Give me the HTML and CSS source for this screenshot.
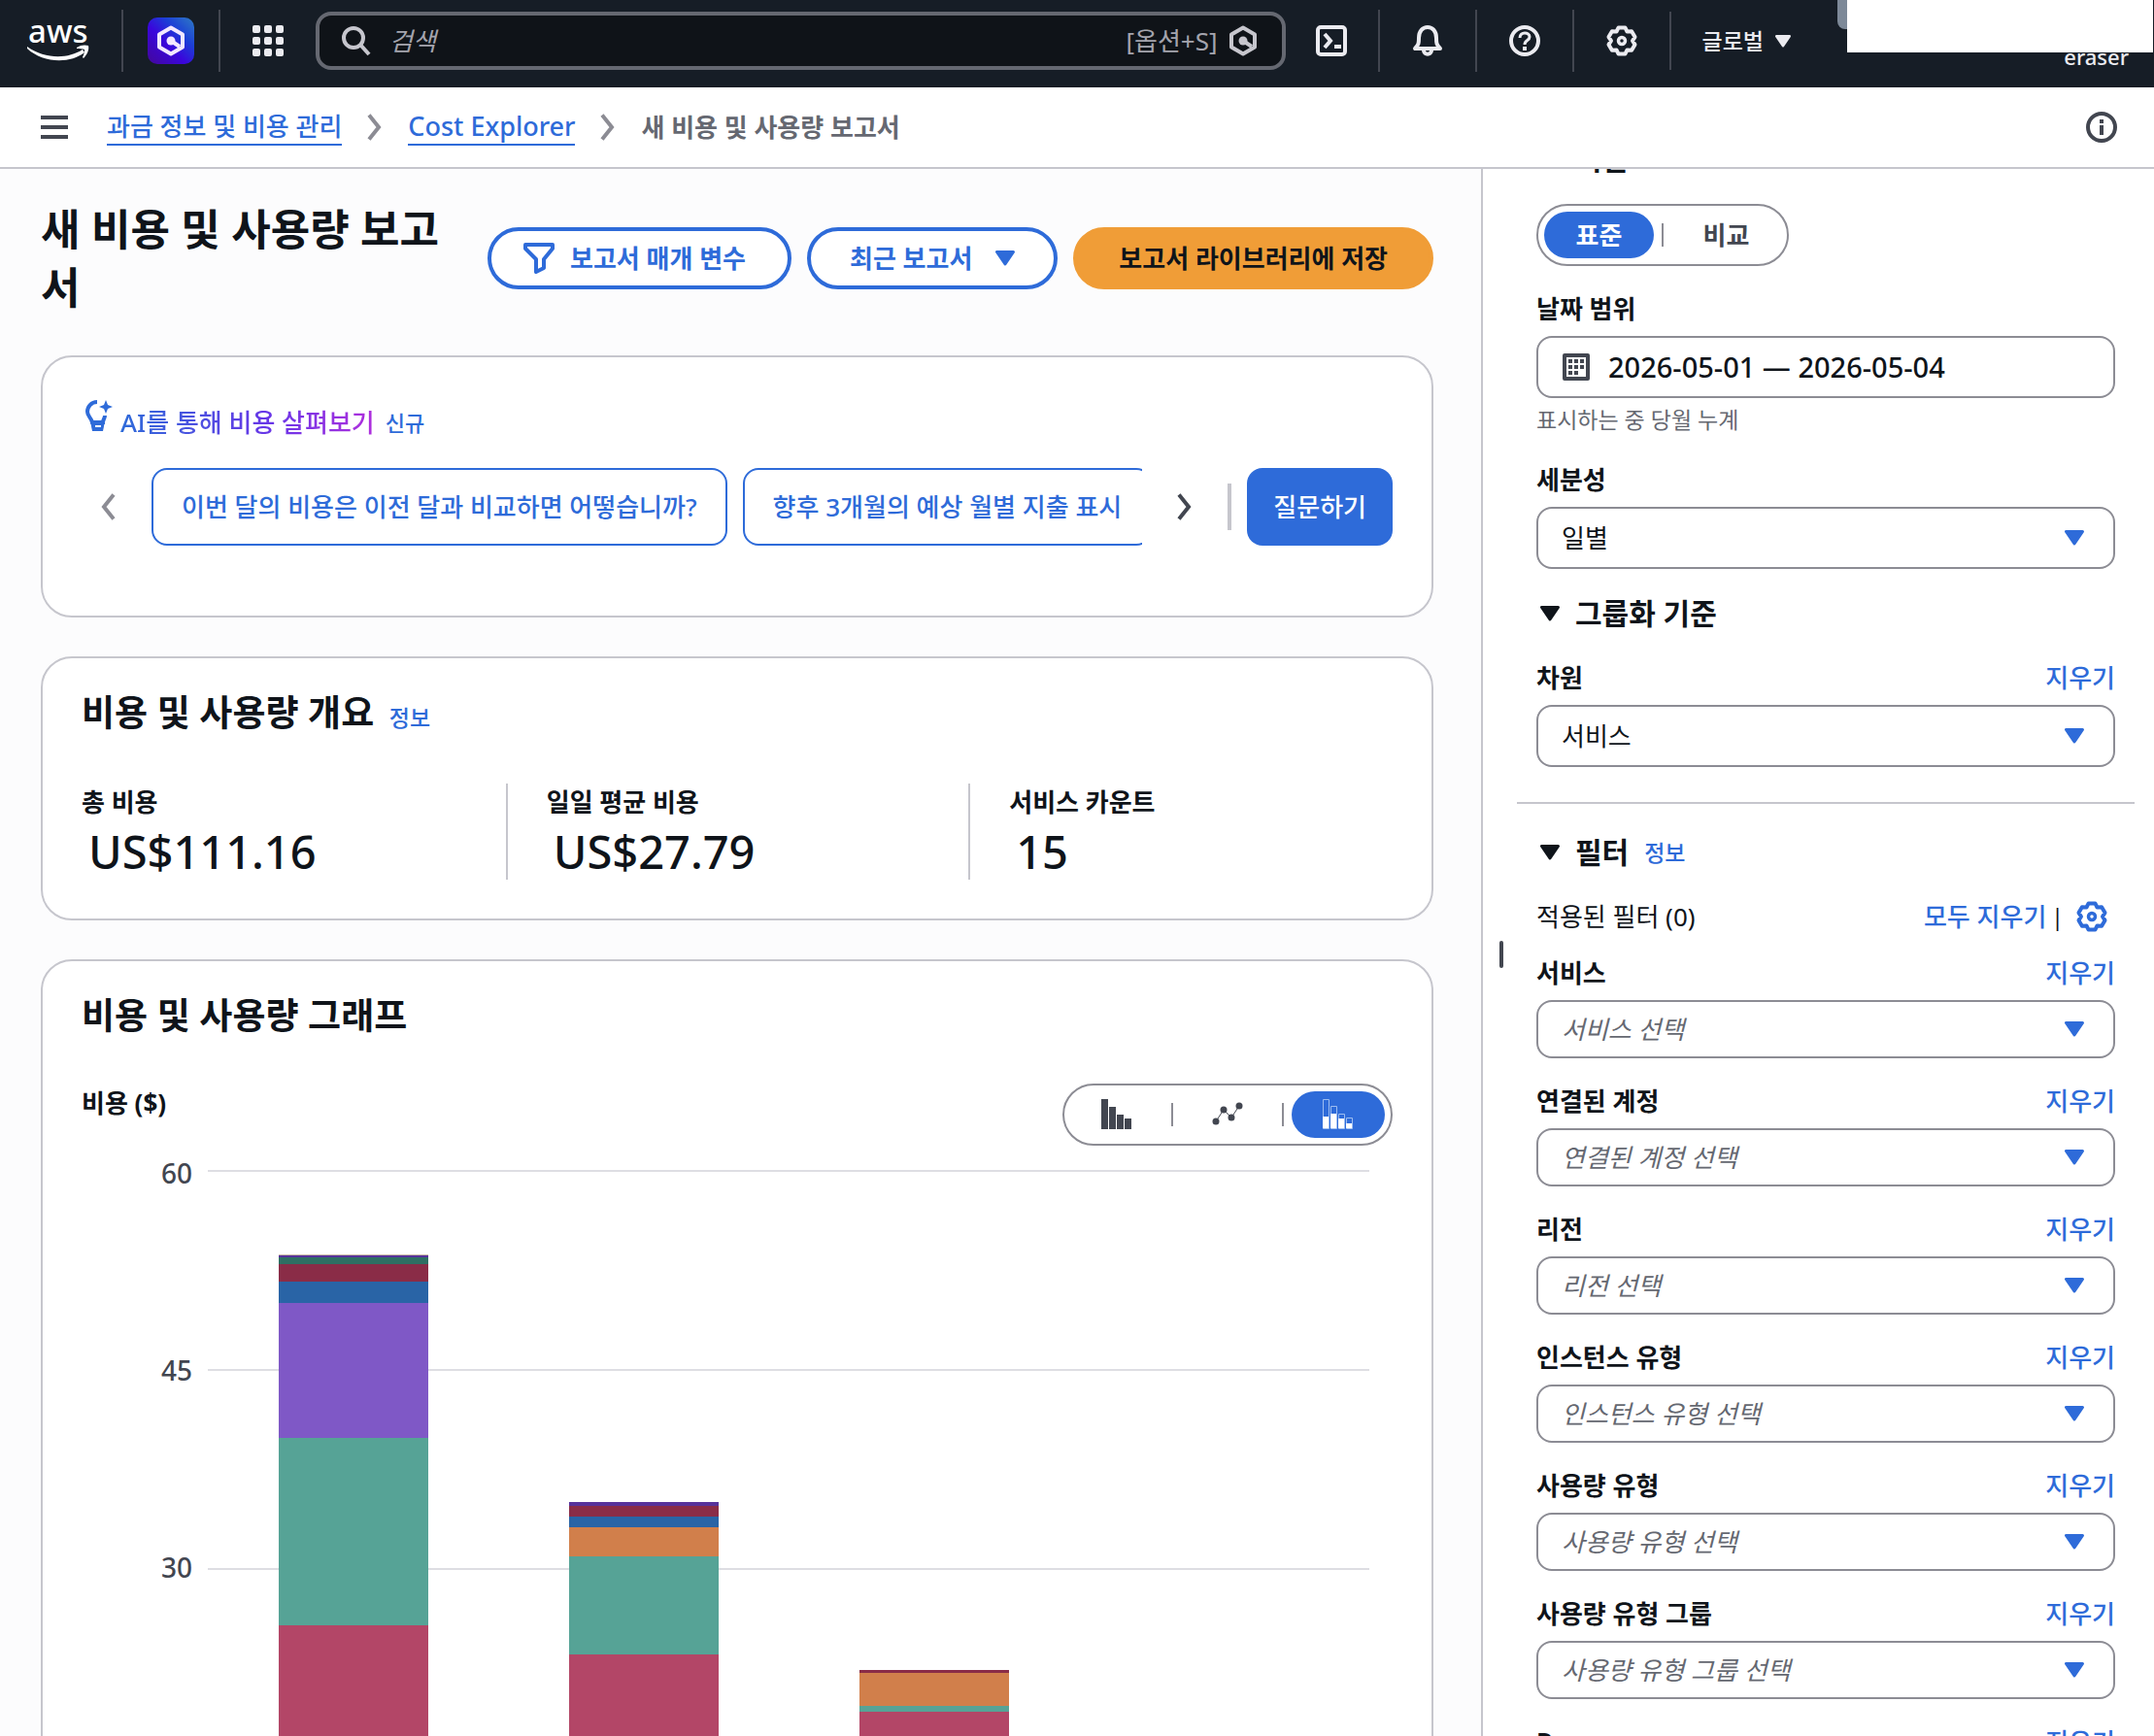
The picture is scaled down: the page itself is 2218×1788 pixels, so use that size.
FILE: index.html
```html
<!DOCTYPE html>
<html lang="ko">
<head>
<meta charset="utf-8">
<meta name="viewport" content="width=device-width, initial-scale=1">
<title>새 비용 및 사용량 보고서</title>
<link rel="stylesheet" href="styles.css">
</head>
<body>
<svg class="defs" aria-hidden="true">
  <symbol id="gear" viewBox="0 0 32 32"><path d="M12.6 2.4h6.8l2.1 4.1 4.6-.2 3.4 5.8L27 16l2.5 3.9-3.4 5.8-4.6-.2-2.1 4.1h-6.8l-2.1-4.1-4.6.2-3.4-5.8L5 16l-2.5-3.9 3.4-5.8 4.6.2z" fill="none" stroke="currentColor" stroke-width="4" stroke-linejoin="round"/><circle cx="16" cy="16" r="3.5" fill="none" stroke="currentColor" stroke-width="3.500"/></symbol>
  <symbol id="assistant" viewBox="0 0 32 32"><path d="M16 2.5 28 9.5v13l-12 7-12-7v-13z" fill="none" stroke="currentColor" stroke-width="4" stroke-linejoin="round"/><path d="M16 16l9 6" stroke="currentColor" stroke-width="4"/><circle cx="16" cy="16" r="4.5" fill="currentColor"/></symbol>
  <symbol id="caret" viewBox="0 0 20 16"><path d="M1.500 1.500h17l-8.500 12.500z" fill="currentColor" stroke="currentColor" stroke-width="3" stroke-linejoin="round"/></symbol>
  <symbol id="chevron" viewBox="0 0 16 28"><path d="M2 1.500l10 12.500-10 12.500" fill="none" stroke="currentColor" stroke-width="4"/></symbol>
</svg>

<header class="topnav">
  <a class="logo" href="#" aria-label="AWS">
    <svg width="66" height="42" viewBox="0 0 66 42"><text x="2" y="23" class="logo-text">aws</text><path d="M1 27c18 13 42 13 57 3l2 3C45 45 17 44 1 29z" fill="#fff"/><path d="M52 28c4-3 9-3 12-2 1 4-1 9-5 13l-1-1c2-4 2-6 2-8-2-1-5-1-8-1z" fill="#fff"/></svg>
  </a>
  <div class="nav-cell"><button class="q-tile" aria-label="Amazon Q"><svg width="32" height="32"><use href="#assistant"/></svg></button></div>
  <div class="nav-cell"><button class="icon-btn" aria-label="서비스"><svg width="32" height="32" viewBox="0 0 32 32" fill="currentColor"><rect width="8" height="8" rx="2"/><rect x="12" width="8" height="8" rx="2"/><rect x="24" width="8" height="8" rx="2"/><rect y="12" width="8" height="8" rx="2"/><rect x="12" y="12" width="8" height="8" rx="2"/><rect x="24" y="12" width="8" height="8" rx="2"/><rect y="24" width="8" height="8" rx="2"/><rect x="12" y="24" width="8" height="8" rx="2"/><rect x="24" y="24" width="8" height="8" rx="2"/></svg></button></div>
  <div class="search">
    <svg width="32" height="32" viewBox="0 0 32 32" fill="none" stroke="currentColor" stroke-width="4"><circle cx="13" cy="13" r="10"/><path d="M20 20l9 10"/></svg>
    <input type="search" placeholder="검색" aria-label="검색">
    <span class="shortcut">[옵션+S]</span>
    <svg width="32" height="32"><use href="#assistant"/></svg>
  </div>
  <div class="nav-cell plain"><button class="icon-btn" aria-label="CloudShell"><svg width="32" height="32" viewBox="0 0 32 32" fill="none" stroke="currentColor" stroke-width="4"><rect x="2" y="2" width="28" height="28" rx="3"/><path d="M9 9l6 7-6 7M19 22h7"/></svg></button></div>
  <div class="nav-cell"><button class="icon-btn" aria-label="알림"><svg width="32" height="32" viewBox="0 0 32 32" fill="none" stroke="currentColor" stroke-width="4" stroke-linejoin="round"><path d="M3 24h26c-4-4-4-6-4-11 0-7-4-11-9-11s-9 4-9 11c0 5 0 7-4 11z"/><path d="M12 26c0 5 8 5 8 0"/></svg></button></div>
  <div class="nav-cell"><button class="icon-btn" aria-label="도움말"><svg width="32" height="32" viewBox="0 0 32 32" fill="none" stroke="currentColor" stroke-width="4"><circle cx="16" cy="16" r="14"/><path d="M11 13c0-7 10-6 10-1 0 4-5 3-5 8" stroke-width="3"/><path d="M16 22v4" stroke-width="4"/></svg></button></div>
  <div class="nav-cell"><button class="icon-btn" aria-label="설정"><svg width="32" height="32"><use href="#gear"/></svg></button></div>
  <button class="region">글로벌 <svg width="16" height="13"><use href="#caret"/></svg></button>
  <div class="account"><span class="account-name">eraser</span><span class="account-tab"></span><span class="account-cover"></span></div>
</header>

<nav class="crumbs" aria-label="탐색 경로">
  <button class="menu" aria-label="메뉴"><span></span><span></span><span></span></button>
  <a href="#">과금 정보 및 비용 관리</a>
  <svg class="sep" width="16" height="28"><use href="#chevron"/></svg>
  <a class="latin" href="#">Cost Explorer</a>
  <svg class="sep" width="16" height="28"><use href="#chevron"/></svg>
  <span class="current">새 비용 및 사용량 보고서</span>
  <button class="info" aria-label="정보"><svg width="32" height="32" viewBox="0 0 32 32" fill="none" stroke="currentColor" stroke-width="4"><circle cx="16" cy="16" r="14"/><path d="M16 14v10M16 8v4"/></svg></button>
</nav>

<div class="workspace">
  <main class="report">
    <div class="report-head">
      <h1>새 비용 및 사용량 보고서</h1>
      <div class="actions">
        <button class="btn with-icon"><svg width="32" height="32" viewBox="0 0 32 32" fill="none" stroke="currentColor" stroke-width="4" stroke-linejoin="round"><path d="M2 2h28v4l-9 11v9l-8 4V17L2 6z"/></svg>보고서 매개 변수</button>
        <button class="btn">최근 보고서 <svg width="20" height="16"><use href="#caret"/></svg></button>
        <button class="btn primary">보고서 라이브러리에 저장</button>
      </div>
    </div>

    <section class="card ai">
      <p class="ai-title">
        <svg width="28" height="32" viewBox="0 0 28 32"><path d="M12 2C6 2 2 7 2 12c0 5 4 6 5 11h11c0-3 2-4 2-7" fill="none" stroke="currentColor" stroke-width="4"/><path d="M5 22h15l-2 10H7z" fill="currentColor"/><path d="M10 26h6v2h-6z" fill="#fff"/><path d="M21 0l2 5 5 2-5 2-2 5-2-5-5-2 5-2z" fill="currentColor"/></svg>
        <span class="gradient">AI를 통해 비용 살펴보기</span>
        <span class="new">신규</span>
      </p>
      <div class="prompts">
        <button class="arrow off" aria-label="이전"><svg width="16" height="28" viewBox="0 0 16 28"><path d="M14 1.500L4 14l10 12.500" fill="none" stroke="currentColor" stroke-width="4"/></svg></button>
        <div class="chips">
          <button class="chip">이번 달의 비용은 이전 달과 비교하면 어떻습니까?</button>
          <button class="chip">향후 3개월의 예상 월별 지출 표시</button>
        </div>
        <button class="arrow" aria-label="다음"><svg width="16" height="28"><use href="#chevron"/></svg></button>
        <span class="rule"></span>
        <button class="ask">질문하기</button>
      </div>
    </section>

    <section class="card overview">
      <h2>비용 및 사용량 개요 <a href="#">정보</a></h2>
      <dl class="stats">
        <div><dt>총 비용</dt><dd>US$111.16</dd></div>
        <div><dt>일일 평균 비용</dt><dd>US$27.79</dd></div>
        <div><dt>서비스 카운트</dt><dd>15</dd></div>
      </dl>
    </section>

    <section class="card graph">
      <h2>비용 및 사용량 그래프</h2>
      <div class="graph-head">
        <h3>비용 ($)</h3>
        <div class="segments">
          <button aria-label="막대"><svg width="32" height="32" viewBox="0 0 32 32" fill="currentColor"><path d="M0 0h7v31H0zM8 8h7v23H8zM16 16h7v15h-7zM24 20h7v11h-7z"/></svg></button>
          <button aria-label="선"><svg width="32" height="32" viewBox="0 0 32 32" fill="currentColor"><path d="M4 23l8-12 8 8 8-12" fill="none" stroke="currentColor"/><circle cx="4" cy="23" r="3.500"/><circle cx="12" cy="11" r="3.500"/><circle cx="20" cy="19" r="3.500"/><circle cx="28" cy="7" r="3.500"/></svg></button>
          <button class="on" aria-label="스택"><svg width="32" height="32" viewBox="0 0 32 32"><path d="M.5.5h6v30h-6zM8.500 7.500h6v23h-6zM16.500 15.500h6v15h-6zM24.500 19.500h6v11h-6z" fill="none" stroke="#9dbdf0"/><path d="M0 18h6v12H0zM8 15h6v15H8zM16 20h6v10h-6zM24 25h6v5h-6z" fill="#fff"/></svg></button>
        </div>
      </div>
      <div class="chart">
        <div class="axis"><span>60</span><span>45</span><span>30</span><span>15</span></div>
        <div class="plot">
          <div class="lines"><i></i><i></i><i></i><i></i></div>
          <div class="bars">
            <div class="bar"><i class="tan" style="height:1px"></i><i class="violet" style="height:2px"></i><i class="green" style="height:7px"></i><i class="maroon" style="height:18px"></i><i class="blue" style="height:22px"></i><i class="purple" style="height:139px"></i><i class="teal" style="height:193px"></i><i class="pink" style="height:351px"></i></div>
            <div class="bar"><i class="violet" style="height:4px"></i><i class="maroon" style="height:11px"></i><i class="blue" style="height:11px"></i><i class="orange" style="height:30px"></i><i class="teal" style="height:101px"></i><i class="pink" style="height:321px"></i></div>
            <div class="bar"><i class="maroon" style="height:3px"></i><i class="orange" style="height:34px"></i><i class="teal" style="height:6px"></i><i class="pink" style="height:262px"></i></div>
            <div class="bar"></div>
          </div>
        </div>
      </div>
    </section>
  </main>

  <aside class="panel">
    <div class="grip"><span></span></div>
    <div class="params">
      <section class="group">
        <h2 class="fold"><svg width="20" height="16"><use href="#caret"/></svg>시간</h2>
        <div class="segments text"><button class="on">표준</button><button>비교</button></div>
        <div class="field"><label for="range">날짜 범위</label>
          <button class="control date" id="range"><svg width="28" height="28" viewBox="0 0 28 28"><path d="M2 2h24v24H2z" fill="none" stroke="currentColor" stroke-width="4" stroke-linejoin="round"/><path d="M6 6h4v4H6zM12 6h4v4h-4zM18 6h4v4h-4zM6 12h4v4H6zM12 12h4v4h-4zM18 12h4v4h-4zM6 18h4v4H6zM12 18h4v4h-4z" fill="currentColor"/></svg>2026-05-01 — 2026-05-04</button>
          <p class="hint">표시하는 중 당월 누계</p></div>
        <div class="field"><label for="gran">세분성</label>
          <div class="pick"><select class="control" id="gran"><option>일별</option></select><svg width="20" height="16"><use href="#caret"/></svg></div></div>
        <h2 class="fold"><svg width="20" height="16"><use href="#caret"/></svg>그룹화 기준</h2>
        <div class="field"><div class="label-row"><label for="dim">차원</label><button class="clear">지우기</button></div>
          <div class="pick"><select class="control" id="dim"><option>서비스</option></select><svg width="20" height="16"><use href="#caret"/></svg></div></div>
      </section>
      <section class="group filters">
        <h2 class="fold"><svg width="20" height="16"><use href="#caret"/></svg>필터 <a href="#">정보</a></h2>
        <div class="applied"><span>적용된 필터 (0)</span><span class="tools"><button class="clear">모두 지우기</button><span class="bar-sep">|</span><button class="gear" aria-label="설정"><svg width="32" height="32"><use href="#gear"/></svg></button></span></div>
        <div class="field"><div class="label-row"><label for="f1">서비스</label><button class="clear">지우기</button></div>
          <div class="pick"><select class="control" id="f1"><option>서비스 선택</option></select><svg width="20" height="16"><use href="#caret"/></svg></div></div>
        <div class="field"><div class="label-row"><label for="f2">연결된 계정</label><button class="clear">지우기</button></div>
          <div class="pick"><select class="control" id="f2"><option>연결된 계정 선택</option></select><svg width="20" height="16"><use href="#caret"/></svg></div></div>
        <div class="field"><div class="label-row"><label for="f3">리전</label><button class="clear">지우기</button></div>
          <div class="pick"><select class="control" id="f3"><option>리전 선택</option></select><svg width="20" height="16"><use href="#caret"/></svg></div></div>
        <div class="field"><div class="label-row"><label for="f4">인스턴스 유형</label><button class="clear">지우기</button></div>
          <div class="pick"><select class="control" id="f4"><option>인스턴스 유형 선택</option></select><svg width="20" height="16"><use href="#caret"/></svg></div></div>
        <div class="field"><div class="label-row"><label for="f5">사용량 유형</label><button class="clear">지우기</button></div>
          <div class="pick"><select class="control" id="f5"><option>사용량 유형 선택</option></select><svg width="20" height="16"><use href="#caret"/></svg></div></div>
        <div class="field"><div class="label-row"><label for="f6">사용량 유형 그룹</label><button class="clear">지우기</button></div>
          <div class="pick"><select class="control" id="f6"><option>사용량 유형 그룹 선택</option></select><svg width="20" height="16"><use href="#caret"/></svg></div></div>
        <div class="field"><div class="label-row"><label for="f7">Resource</label><button class="clear">지우기</button></div>
          <div class="pick"><select class="control" id="f7"><option>Resource 선택</option></select><svg width="20" height="16"><use href="#caret"/></svg></div></div>
      </section>
    </div>
  </aside>
</div>
</body>
</html>
```
FILE: styles.css
```css
:root {
  --blue: #2e6bd9;
  --ink: #0f141a;
  --grey: #656871;
  --slate: #424650;
  --line: #c6c6cd;
  --control: #8c8c94;
}

* { box-sizing: border-box; }

body {
  margin: 0;
  height: 100vh;
  display: flex;
  flex-direction: column;
  overflow: hidden;
  color: var(--ink);
  background: #fff;
  font: 26px/40px "Noto Sans", "Noto Sans CJK KR", sans-serif;
}

h1, h2, h3, p, dl, dd { margin: 0; }
button, input, select { font: inherit; color: inherit; margin: 0; }
button { padding: 0; border: 0; background: none; cursor: pointer; white-space: nowrap; }
a { color: var(--blue); text-decoration: none; }
svg { display: block; flex: none; }
.defs { position: absolute; width: 0; height: 0; }

/* Top navigation */
.topnav {
  display: flex;
  align-items: center;
  height: 90px;
  flex: none;
  padding-bottom: 6px;
  color: #ebebf0;
  background: #161d26;
}
.logo { width: 125px; padding: 0 0 0 27px; }
.logo svg { overflow: visible; }
.logo-text { font: 500 33px "Noto Sans", sans-serif; fill: #fff; }
.nav-cell {
  display: flex;
  align-items: center;
  justify-content: center;
  width: 100px;
  height: 64px;
  border-left: 2px solid var(--slate);
}
.nav-cell.plain { width: 95px; border: 0; }
.q-tile {
  display: grid;
  place-items: center;
  width: 48px;
  height: 48px;
  border-radius: 10px;
  color: #f3e8ff;
  background: linear-gradient(to top right, #44089a, #3a06dc 42%, #1c3fd6 68%, #2f7cc4);
}
.search {
  display: flex;
  align-items: center;
  flex: 1;
  height: 60px;
  padding: 0 24px 0 22px;
  border: 4px solid var(--grey);
  border-radius: 16px;
  color: #c6c6cd;
  background: #0f1318;
}
.search input {
  flex: 1;
  min-width: 0;
  padding: 0 0 0 18px;
  border: 0;
  outline: 0;
  background: none;
}
.search input::placeholder { color: #a4a4ad; font-style: italic; opacity: 1; }
.shortcut { margin-right: 10px; color: #a4a4ad; }
.region {
  display: flex;
  align-items: center;
  gap: 12px;
  height: 60px;
  padding: 0 48px 0 32px;
  border-left: 2px solid var(--slate);
  font-size: 23px;
  font-weight: 500;
}
.account {
  position: relative;
  align-self: stretch;
  width: 326px;
  padding: 38px 26px 0 0;
  text-align: right;
  font-size: 22px;
  font-weight: 500;
}
.account-tab {
  position: absolute;
  top: 0;
  left: 0;
  width: 20px;
  height: 30px;
  border-radius: 0 0 0 8px;
  background: #7d8998;
}
.account-cover { position: absolute; top: 0; left: 10px; right: 1px; height: 54px; background: #fff; }

/* Breadcrumbs */
.crumbs {
  display: flex;
  align-items: center;
  flex: none;
  height: 84px;
  padding: 0 38px 0 42px;
  border-bottom: 2px solid var(--line);
}
.crumbs a { line-height: 36px; border-bottom: 2px solid var(--blue); font-weight: 500; }
.crumbs .latin { font-size: 27px; }
.menu { display: grid; gap: 6px; width: 28px; margin-right: 40px; }
.menu span { height: 4px; background: var(--slate); }
.sep { margin: 0 26px; color: var(--control); }
.current { color: var(--grey); font-weight: 700; }
.info { margin-left: auto; color: var(--slate); }

/* Workspace */
.workspace { display: flex; flex: 1; min-height: 0; }
.report {
  flex: 1;
  min-width: 0;
  overflow: hidden;
  padding: 32px 49px 0 42px;
  background: #fcfcfd;
}
.report-head { display: flex; align-items: center; gap: 40px; margin-bottom: 40px; }
h1 { flex: 1; font-size: 44px; line-height: 60px; font-weight: 700; }
.actions { display: flex; gap: 16px; }
.btn {
  display: flex;
  align-items: center;
  gap: 24px;
  height: 64px;
  padding: 0 40px;
  border: 4px solid var(--blue);
  border-radius: 32px;
  color: var(--blue);
  background: #fff;
  font-weight: 700;
}
.btn.with-icon { gap: 16px; padding: 0 43px 0 33px; }
.btn.primary { padding: 0 43px; border-color: #f09d37; color: var(--ink); background: #f09d37; }

.card {
  margin-bottom: 40px;
  padding: 36px 40px 40px;
  border: 2px solid var(--line);
  border-radius: 32px;
  background: #fff;
}
.card h2 { font-size: 37px; line-height: 40px; font-weight: 700; }
.card h2 a, .fold a { margin-left: 6px; font-size: 23px; font-weight: 500; }

.ai { height: 270px; }
.ai-title { display: flex; align-items: center; gap: 8px; height: 62px; color: var(--blue); }
.ai-title svg { align-self: flex-start; margin: 8px 0 0 4px; }
.gradient {
  color: transparent;
  background: linear-gradient(to right, #2e6bd9, #6a35e8 60%, #b02fdc);
  background-clip: text;
  -webkit-background-clip: text;
  font-weight: 500;
}
.new { margin-left: 3px; font-size: 22px; font-weight: 500; }
.prompts { display: flex; align-items: center; margin-top: 16px; }
.arrow { display: flex; justify-content: center; width: 88px; color: var(--slate); }
.arrow.off { width: 72px; padding-right: 18px; color: var(--control); }
.chips { display: flex; flex: 1; gap: 16px; min-width: 0; overflow: hidden; }
.chip {
  height: 80px;
  padding: 0 29px;
  border: 2px solid var(--blue);
  border-radius: 16px;
  color: var(--blue);
  font-weight: 500;
}
.rule { width: 4px; height: 48px; margin-right: 16px; background: var(--line); }
.ask { height: 80px; padding: 0 27px; border-radius: 16px; color: #fff; background: var(--blue); font-weight: 500; }

.stats { display: grid; grid-template-columns: 11fr 12fr 11fr; margin-top: 48px; }
.stats div { height: 99px; }
.stats div + div { padding-left: 40px; border-left: 2px solid var(--line); }
dt { font-weight: 700; line-height: 38px; }
dd { padding-left: 7px; font-size: 47px; line-height: 64px; font-weight: 500; }

.graph { margin-bottom: 0; }
.graph-head { display: flex; justify-content: space-between; margin-top: 50px; }
.graph-head h3 { font-size: 26px; font-weight: 700; }
.segments {
  display: flex;
  gap: 18px;
  height: 64px;
  padding: 6px;
  border: 2px solid var(--control);
  border-radius: 32px;
  color: var(--slate);
  background: #fff;
}
.segments button {
  position: relative;
  display: grid;
  place-items: center;
  width: 96px;
  border-radius: 24px;
  font-weight: 700;
}
.segments button + button::before {
  content: "";
  position: absolute;
  left: -10px;
  top: 12px;
  width: 2px;
  height: 24px;
  background: var(--control);
}
.segments .on { color: #fff; background: var(--blue); }
.segments.text { width: max-content; margin-top: 24px; }
.segments.text button { width: 113px; }

.chart { display: flex; margin: 25px 24px 0 0; }
.axis { width: 130px; padding-right: 16px; margin-top: -17px; color: var(--slate); text-align: right; font-size: 28px; font-weight: 500; }
.axis span { display: block; height: 203px; }
.plot { display: grid; flex: 1; height: 820px; }
.lines, .bars { grid-area: 1 / 1; }
.lines i { display: block; height: 205px; border-top: 2px solid #dedee3; }
.bars { display: flex; }
.bar { display: flex; flex: 1; flex-direction: column; justify-content: flex-end; align-items: center; }
.bar i { width: 154px; }
.tan { background: #c9b8a8; }
.violet { background: #57329b; }
.green { background: #2e6f63; }
.maroon { background: #8a2c47; }
.blue { background: #2964a6; }
.purple { background: #7f58c6; }
.teal { background: #56a396; }
.pink { background: #b34667; }
.orange { background: #d17f4b; }

/* Report parameters */
.panel {
  display: flex;
  flex: none;
  width: 693px;
  overflow: hidden;
  padding-right: 20px;
  border-left: 2px solid var(--line);
}
.grip { display: flex; align-items: center; width: 35px; padding: 4px 0 0 17px; }
.grip span { width: 4px; height: 28px; border-radius: 2px; background: var(--slate); }
.params { flex: 1; margin-top: -32px; }
.group { padding: 0 20px; }
.filters { margin-top: 36px; padding-top: 28px; border-top: 2px solid var(--line); }
.fold { display: flex; align-items: center; font-size: 30px; line-height: 44px; font-weight: 700; }
.fold svg { margin: 0 16px 0 4px; }
.fold a { margin-left: 16px; }
.field, .group .fold + .field, .field + .fold { margin-top: 24px; }
label { display: block; font-weight: 700; }
.label-row, .applied { display: flex; justify-content: space-between; }
.clear { color: var(--blue); font-weight: 500; }
.control {
  display: flex;
  align-items: center;
  width: 100%;
  height: 64px;
  margin-top: 8px;
  padding: 0 24px;
  border: 2px solid var(--control);
  border-radius: 16px;
  background: #fff;
  appearance: none;
}
.date { gap: 19px; padding: 0 25px; font-size: 29px; font-weight: 500; }
.date svg { color: var(--slate); }
.hint { margin-top: 4px; color: var(--grey); font-size: 23px; line-height: 36px; }
.pick { display: grid; align-items: center; }
.pick > * { grid-area: 1 / 1; }
.pick svg { justify-self: end; margin: 8px 32px 0 0; color: var(--blue); pointer-events: none; }
.filters .control { height: 60px; color: var(--grey); font-style: italic; }
.applied { margin-top: 24px; }
.applied + .field { margin-top: 18px; }
.tools { display: flex; align-items: center; gap: 5px; padding-right: 8px; }
.bar-sep { font-size: 23px; }
.gear { margin-left: 8px; color: var(--blue); }
```
